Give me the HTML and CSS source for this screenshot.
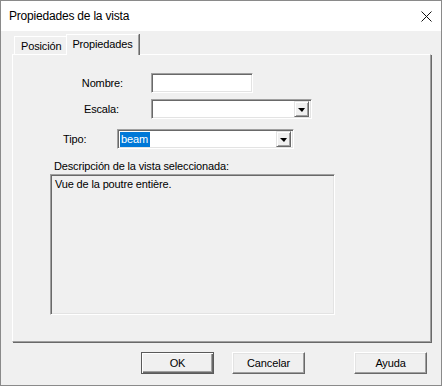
FILE: index.html
```html
<!DOCTYPE html>
<html lang="es">
<head>
<meta charset="utf-8">
<title>Propiedades de la vista</title>
<link rel="stylesheet" href="styles.css">
</head>
<body>
<div class="window">
  <div class="titlebar">
    <span class="title">Propiedades de la vista</span>
    <svg class="close" width="11" height="11" viewBox="0 0 11 11"><path d="M0.5 0.5 L10.5 10.5 M10.5 0.5 L0.5 10.5" stroke="#111" stroke-width="1" fill="none"/></svg>
  </div>
  <div class="client">
    <div class="tabs">
      <div class="tab">Posición</div>
      <div class="tab active">Propiedades</div>
    </div>
    <div class="panel">
      <div class="row row-nombre">
        <span class="label">Nombre:</span>
        <div class="field edit w-nombre"></div>
      </div>
      <div class="row row-escala">
        <span class="label">Escala:</span>
        <div class="field combo w-escala">
          <span class="combo-text"></span>
          <span class="drop"><span class="tri"></span></span>
        </div>
      </div>
      <div class="row row-tipo">
        <span class="label">Tipo:</span>
        <div class="field combo w-tipo">
          <span class="combo-text"><span class="sel">beam</span></span>
          <span class="drop"><span class="tri"></span></span>
        </div>
      </div>
      <div class="desc-label">Descripción de la vista seleccionada:</div>
      <div class="field memo">Vue de la poutre entière.</div>
    </div>
    <div class="buttons">
      <div class="btn default">OK</div>
      <div class="btn">Cancelar</div>
      <div class="btn help">Ayuda</div>
    </div>
  </div>
</div>
</body>
</html>
```
FILE: styles.css
```css
* { box-sizing: border-box; }
html, body { margin: 0; padding: 0; background: #f0f0f0; }
body { font-family: "Liberation Sans", Arial, sans-serif; font-size: 11px; letter-spacing: -0.15px; color: #000; }

.window {
  width: 442px;
  height: 386px;
  border: 1px solid #8a8a8a;
  display: flex;
  flex-direction: column;
  background: #f0f0f0;
}

.titlebar {
  height: 30px;
  background: #fff;
  display: flex;
  align-items: center;
  padding: 0 9px 0 8px;
  flex: none;
}
.title { font-size: 12px; letter-spacing: -0.2px; flex: 1; padding-bottom: 1px; }

.client {
  flex: 1;
  display: flex;
  flex-direction: column;
  padding: 3px 10px 0 11px;
}

.tabs {
  display: flex;
  align-items: flex-end;
  height: 20px;
  padding-left: 2px;
  position: relative;
  z-index: 1;
}
.tab {
  height: 18px;
  padding: 3px 5px 0 6px;
  border-top: 1px solid #fff;
  border-left: 1px solid #fff;
  border-right: 1px solid #a0a0a0;
  box-shadow: 1px 0 0 #696969;
  margin-right: 1px;
}
.tab.active {
  height: 21px;
  margin-left: -2px;
  margin-bottom: -1px;
  padding: 3px 5px 0 5px;
  background: #f0f0f0;
}

.panel {
  width: 419px;
  height: 288px;
  border-top: 1px solid #fff;
  border-left: 1px solid #fff;
  border-right: 1px solid #a0a0a0;
  border-bottom: 1px solid #a0a0a0;
  box-shadow: 1px 1px 0 #696969;
  display: flex;
  flex-direction: column;
}

.row { display: flex; align-items: center; height: 20px; }
.label { display: block; }
.row-nombre { margin-top: 18px; }
.row-nombre .label { width: 110px; text-align: right; margin-right: 28px; }
.row-escala { margin-top: 6px; }
.row-escala .label { width: 106px; text-align: right; margin-right: 32px; }
.row-tipo { margin-top: 10px; }
.row-tipo .label { margin-left: 50px; width: 54px; }

.field {
  background: #fff;
  border: 1px solid;
  border-color: #a0a0a0 #fff #fff #a0a0a0;
  box-shadow: inset 1px 1px 0 #696969, inset -1px -1px 0 #e3e3e3;
}
.edit { height: 20px; }
.w-nombre { width: 102px; }
.w-escala { width: 161px; }
.w-tipo { width: 177px; }

.combo {
  height: 20px;
  display: flex;
  align-items: center;
  padding: 2px;
}
.combo-text { flex: 1; height: 14px; display: flex; align-items: center; }
.sel { background: #0078d7; color: #fff; height: 15px; line-height: 15px; padding: 0 2px 0 1px; }
.drop {
  width: 15px;
  height: 16px;
  background: #f0f0f0;
  border-top: 1px solid #e3e3e3;
  border-left: 1px solid #e3e3e3;
  border-right: 1px solid #696969;
  border-bottom: 1px solid #696969;
  box-shadow: inset 1px 1px 0 #fff, inset -1px -1px 0 #a0a0a0;
  display: flex;
  align-items: center;
  justify-content: center;
}
.tri {
  width: 0; height: 0;
  border-left: 4px solid transparent;
  border-right: 3px solid transparent;
  border-top: 4px solid #000;
  margin-top: 1px;
}

.desc-label { margin: 11px 0 0 41px; line-height: 13px; }
.memo {
  margin: 1px 0 0 37px;
  width: 285px;
  height: 141px;
  background: #f0f0f0;
  padding: 3px 4px;
  line-height: 13px;
}

.buttons {
  display: flex;
  margin-top: 10px;
  padding-left: 129px;
}
.btn {
  width: 73px;
  height: 22px;
  display: flex;
  align-items: center;
  justify-content: center;
  background: #f0f0f0;
  border-top: 1px solid #fff;
  border-left: 1px solid #fff;
  border-right: 1px solid #696969;
  border-bottom: 1px solid #696969;
  box-shadow: inset -1px -1px 0 #a0a0a0, inset 1px 1px 0 #e3e3e3;
  margin-right: 18px;
}
.btn.default {
  border: 1px solid #5a5a5a;
  box-shadow: inset 1px 1px 0 #fff, inset -1px -1px 0 #696969, inset -2px -2px 0 #a0a0a0;
}
.btn.help { margin-left: 31px; margin-right: 0; }
```
